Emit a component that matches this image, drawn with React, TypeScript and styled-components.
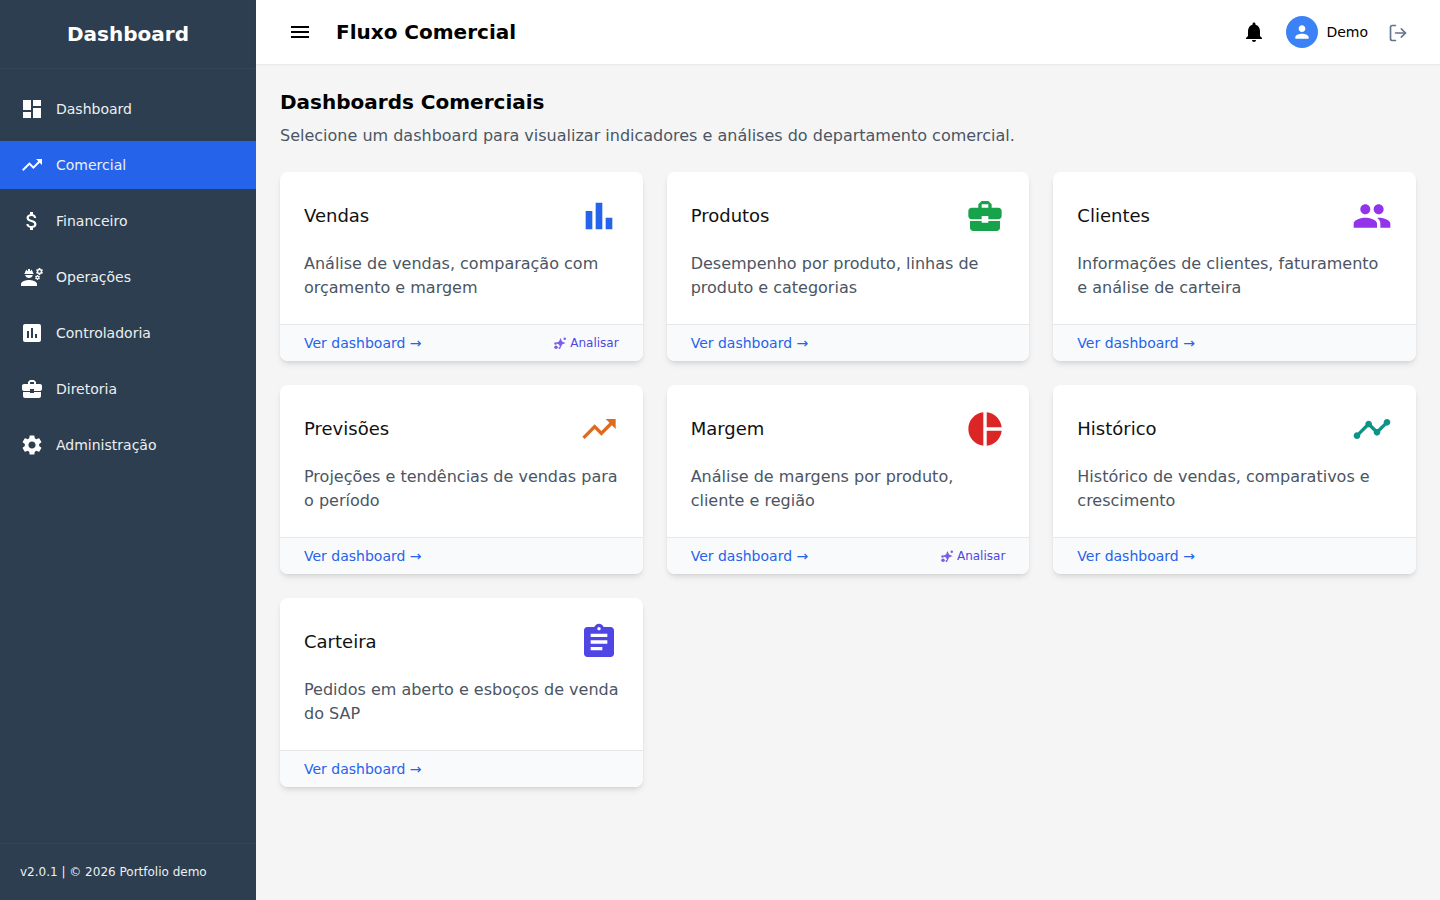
import React from "react";
import styled, { createGlobalStyle } from "styled-components";
import {
  MdDashboard,
  MdTrendingUp,
  MdAttachMoney,
  MdEngineering,
  MdAssessment,
  MdBusinessCenter,
  MdSettings,
  MdNotifications,
  MdMenu,
  MdPerson,
  MdPeople,
  MdPieChart,
  MdTimeline,
  MdAssignment,
} from "react-icons/md";
import { LogOut } from "lucide-react";

const GlobalStyle = createGlobalStyle`
  * { box-sizing: border-box; }
  html, body { margin: 0; height: 100%; }
  body {
    font-family: "DejaVu Sans", sans-serif;
    background: #f5f5f5;
    color: #000;
  }
`;

const Shell = styled.div`
  display: flex;
  height: 900px;
  overflow: hidden;
`;

const Sidebar = styled.aside`
  width: 256px;
  flex-shrink: 0;
  background: #2d3e50;
  color: #ecf0f1;
  display: flex;
  flex-direction: column;
`;

const Brand = styled.div`
  height: 69px;
  padding-top: 20px;
  border-bottom: 1px solid #35455a;
  text-align: center;
  font-size: 20px;
  line-height: 28px;
  font-weight: 700;
  color: #fff;
`;

const Nav = styled.nav`
  flex: 1;
  padding-top: 16px;
  display: flex;
  flex-direction: column;
  gap: 8px;
`;

const NavItem = styled.a<{ $active?: boolean }>`
  height: 48px;
  display: flex;
  align-items: center;
  gap: 12px;
  padding: 0 20px;
  font-size: 14px;
  color: #ecf0f1;
  background: ${(p) => (p.$active ? "#2563eb" : "transparent")};

  svg {
    width: 24px;
    height: 24px;
    color: #fff;
    flex-shrink: 0;
  }
`;

const SideFooter = styled.div`
  height: 57px;
  border-top: 1px solid #35455a;
  padding: 20px 20px 0;
  font-size: 12px;
  line-height: 16px;
  color: #ecf0f1;
`;

const Main = styled.div`
  flex: 1;
  min-width: 0;
  display: flex;
  flex-direction: column;
`;

const Topbar = styled.header`
  height: 64px;
  background: #fff;
  box-shadow: 0 1px 2px rgba(0, 0, 0, 0.06);
  display: flex;
  align-items: center;
  padding: 0 32px;
`;

const MenuButton = styled.div`
  display: flex;
  margin-right: 24px;
  svg {
    width: 24px;
    height: 24px;
  }
`;

const PageName = styled.h1`
  margin: 0;
  font-size: 20px;
  line-height: 28px;
  font-weight: 700;
  flex: 1;
`;

const BellIcon = styled(MdNotifications)`
  width: 24px;
  height: 24px;
  margin-right: 20px;
`;

const Avatar = styled.div`
  width: 32px;
  height: 32px;
  border-radius: 50%;
  background: #3b82f6;
  color: #fff;
  display: flex;
  align-items: center;
  justify-content: center;
  margin-right: 8px;
  svg {
    width: 20px;
    height: 20px;
  }
`;

const UserName = styled.span`
  font-size: 14px;
  margin-right: 20px;
`;

const LogoutIcon = styled(LogOut)`
  width: 20px;
  height: 20px;
  margin-top: 2px;
  color: #64748b;
`;

const Content = styled.main`
  padding: 24px;
`;

const Title = styled.h2`
  margin: 0 0 8px;
  font-size: 20px;
  line-height: 28px;
  font-weight: 700;
`;

const Subtitle = styled.p`
  margin: 0 0 24px;
  font-size: 16px;
  line-height: 24px;
  color: #4b5563;
`;

const Grid = styled.div`
  display: grid;
  grid-template-columns: repeat(3, 1fr);
  gap: 24px;
`;

const Card = styled.article`
  background: #fff;
  border-radius: 8px;
  overflow: hidden;
  box-shadow: 0 4px 6px -1px rgba(0, 0, 0, 0.1), 0 2px 4px -2px rgba(0, 0, 0, 0.1);
  display: flex;
  flex-direction: column;
`;

const CardBody = styled.div`
  padding: 24px;
`;

const CardHead = styled.div`
  display: flex;
  align-items: center;
  justify-content: space-between;
  margin-bottom: 16px;
`;

const CardTitle = styled.h3`
  margin: 0;
  font-size: 18px;
  line-height: 28px;
  font-weight: 400;
  color: #111;
`;

const CardIcon = styled.div<{ $color: string }>`
  display: flex;
  color: ${(p) => p.$color};
  svg {
    width: 40px;
    height: 40px;
  }
`;

const CardText = styled.p`
  margin: 0;
  font-size: 16px;
  line-height: 24px;
  color: #4b5563;
`;

const CardFooter = styled.div`
  height: 37px;
  background: #f9fafb;
  border-top: 1px solid #e5e7eb;
  padding: 0 24px;
  display: flex;
  align-items: center;
  justify-content: space-between;
`;

const CardLink = styled.a`
  font-size: 14px;
  line-height: 20px;
  color: #2563eb;
`;

const Analyze = styled.a`
  display: flex;
  align-items: center;
  gap: 4px;
  font-size: 12px;
  line-height: 16px;
  color: #4f46e5;
  svg {
    width: 12px;
    height: 12px;
    color: #7c5ce8;
  }
`;

const BarChartIcon = () => (
  <svg viewBox="0 0 24 24" fill="currentColor">
    <path d="M4 9h4v11H4zM10 4h4v16h-4zM16 13h4v7h-4z" />
  </svg>
);

const SparkDotsIcon = () => (
  <svg viewBox="0 0 24 24" fill="currentColor">
    <path d="M13 2l3 7 7 3-7 3-3 7-3-7-7-3 7-3z" />
    <circle cx="21.5" cy="3.5" r="2.5" />
    <circle cx="3" cy="13" r="2.5" />
    <circle cx="4" cy="20.5" r="3.5" />
    <circle cx="11" cy="22" r="2" />
  </svg>
);

const navItems = [
  { label: "Dashboard", icon: <MdDashboard /> },
  { label: "Comercial", icon: <MdTrendingUp />, active: true },
  { label: "Financeiro", icon: <MdAttachMoney /> },
  { label: "Operações", icon: <MdEngineering /> },
  { label: "Controladoria", icon: <MdAssessment /> },
  { label: "Diretoria", icon: <MdBusinessCenter /> },
  { label: "Administração", icon: <MdSettings /> },
];

const cards = [
  { title: "Vendas", text: "Análise de vendas, comparação com orçamento e margem", color: "#2563eb", icon: <BarChartIcon />, analyze: true },
  { title: "Produtos", text: "Desempenho por produto, linhas de produto e categorias", color: "#16a34a", icon: <MdBusinessCenter /> },
  { title: "Clientes", text: "Informações de clientes, faturamento e análise de carteira", color: "#9333ea", icon: <MdPeople /> },
  { title: "Previsões", text: "Projeções e tendências de vendas para o período", color: "#dd6b20", icon: <MdTrendingUp /> },
  { title: "Margem", text: "Análise de margens por produto, cliente e região", color: "#dc2626", icon: <MdPieChart />, analyze: true },
  { title: "Histórico", text: "Histórico de vendas, comparativos e crescimento", color: "#0d9488", icon: <MdTimeline /> },
  { title: "Carteira", text: "Pedidos em aberto e esboços de venda do SAP", color: "#4f46e5", icon: <MdAssignment /> },
];

export default function App() {
  return (
    <>
      <GlobalStyle />
      <Shell>
        <Sidebar>
          <Brand>Dashboard</Brand>
          <Nav>
            {navItems.map((item) => (
              <NavItem key={item.label} $active={item.active}>
                {item.icon}
                {item.label}
              </NavItem>
            ))}
          </Nav>
          <SideFooter>v2.0.1 | © 2026 Portfolio demo</SideFooter>
        </Sidebar>
        <Main>
          <Topbar>
            <MenuButton>
              <MdMenu />
            </MenuButton>
            <PageName>Fluxo Comercial</PageName>
            <BellIcon />
            <Avatar>
              <MdPerson />
            </Avatar>
            <UserName>Demo</UserName>
            <LogoutIcon />
          </Topbar>
          <Content>
            <Title>Dashboards Comerciais</Title>
            <Subtitle>
              Selecione um dashboard para visualizar indicadores e análises do departamento comercial.
            </Subtitle>
            <Grid>
              {cards.map((card) => (
                <Card key={card.title}>
                  <CardBody>
                    <CardHead>
                      <CardTitle>{card.title}</CardTitle>
                      <CardIcon $color={card.color}>{card.icon}</CardIcon>
                    </CardHead>
                    <CardText>{card.text}</CardText>
                  </CardBody>
                  <CardFooter>
                    <CardLink>Ver dashboard →</CardLink>
                    {card.analyze && (
                      <Analyze>
                        <SparkDotsIcon />
                        Analisar
                      </Analyze>
                    )}
                  </CardFooter>
                </Card>
              ))}
            </Grid>
          </Content>
        </Main>
      </Shell>
    </>
  );
}
